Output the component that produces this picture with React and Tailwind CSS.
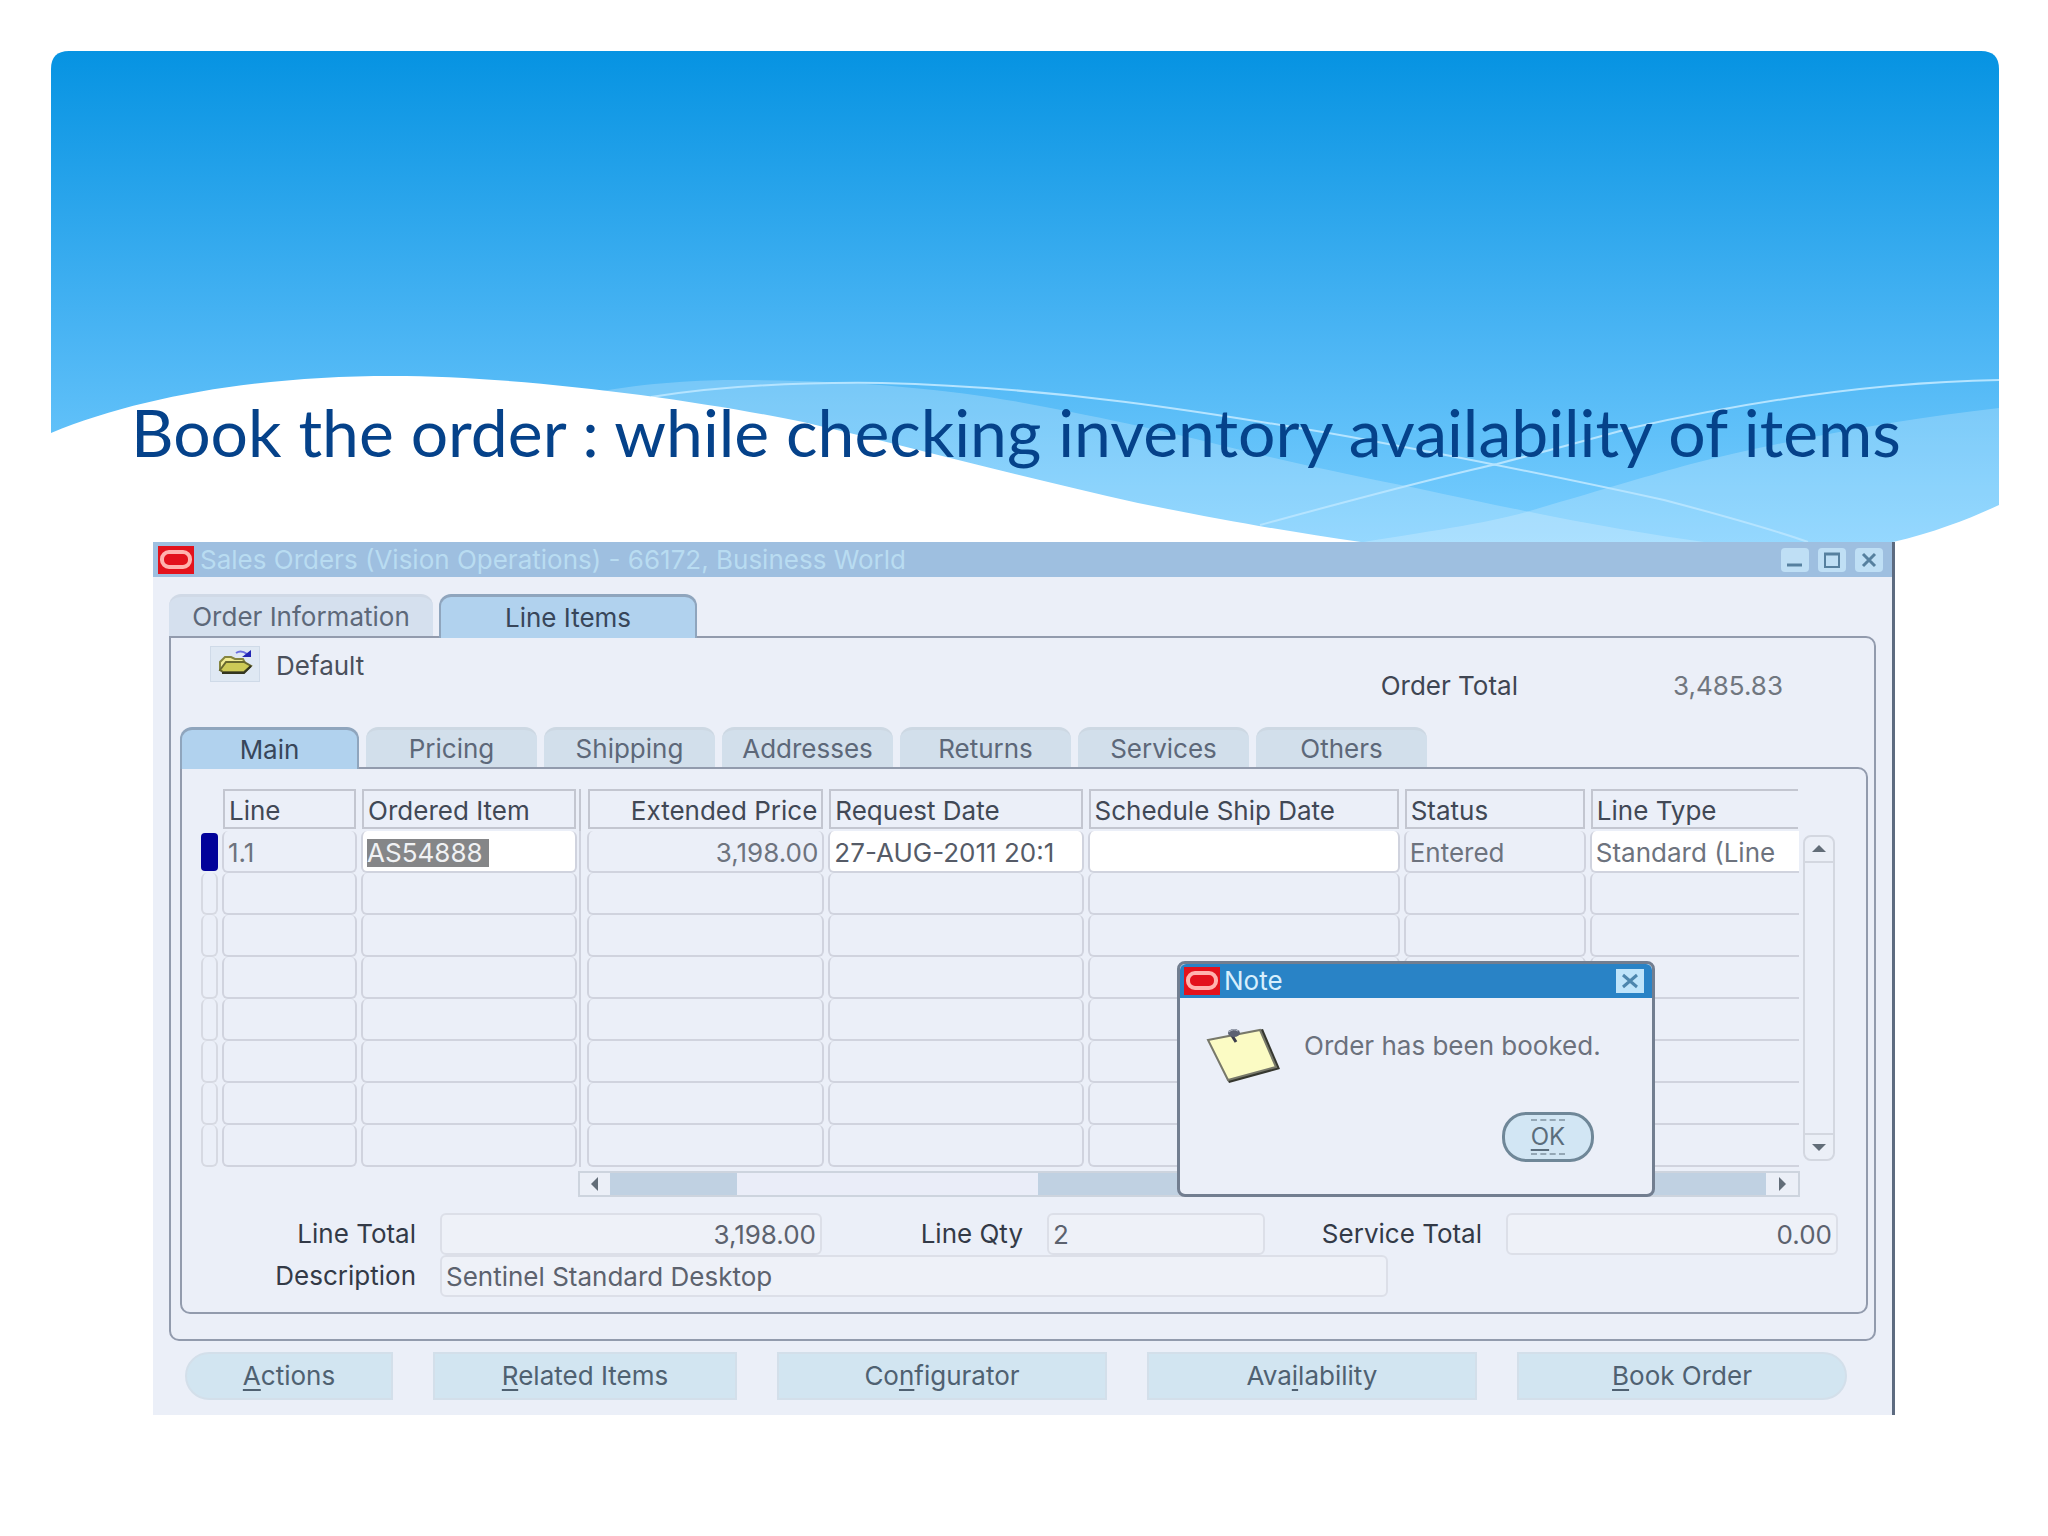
import React, { useState } from 'react';

const orderTabs = [
  { label: 'Order Information', width: 'w-[264px]' },
  { label: 'Line Items', width: 'w-[258px]' },
];

const lineTabs = ['Main', 'Pricing', 'Shipping', 'Addresses', 'Returns', 'Services', 'Others'];

const emptyRows = [2, 3, 4, 5, 6, 7, 8];

function WaveBanner() {
  return (
    <svg
      className="absolute inset-x-[51px] top-[51px] h-[500px] w-[calc(100%-100px)]"
      viewBox="0 0 1948 500"
      preserveAspectRatio="none"
      aria-hidden="true"
    >
      <defs>
        <linearGradient id="sky" x1="0" y1="0" x2="0" y2="1">
          <stop offset="0" stopColor="#0693e2" />
          <stop offset="0.58" stopColor="#4bb5f4" />
          <stop offset="1" stopColor="#7bcfff" />
        </linearGradient>
      </defs>
      <path d="M18 0H1930Q1948 0 1948 18V500H0V18Q0 0 18 0Z" fill="url(#sky)" />
      {/* pale hills */}
      <path
        d="M540 342C600 331 650 329 687 329C800 329 900 338 973 352C1060 368 1130 384 1169 394C1250 414 1310 426 1365 437C1480 462 1570 480 1660 492V500H540Z"
        fill="#fff"
        fillOpacity="0.21"
      />
      <path
        d="M1300 493C1380 480 1440 472 1482 459C1560 436 1600 424 1640 413C1740 388 1850 368 1948 357V500H1300Z"
        fill="#fff"
        fillOpacity="0.21"
      />
      <g fill="none" stroke="#b5e4ff" strokeWidth="2">
        <path d="M600 346C670 335 750 331 831 332C1000 336 1150 360 1300 386C1440 412 1540 433 1613 449C1670 464 1720 478 1757 491" />
        <path d="M1209 474C1290 452 1370 430 1446 413C1500 399 1540 388 1580 377C1700 350 1830 331 1948 329" />
      </g>
      {/* white foreground */}
      <path
        d="M0 382C90 345 210 325 341 325C470 325 640 348 752 371C860 396 970 426 1087 452C1170 469 1240 481 1310 491L1400 500H0Z"
        fill="#fff"
      />
      <path d="M1948 454C1920 467 1885 481 1842 491L1790 500H1948Z" fill="#fff" />
    </svg>
  );
}

function OracleMark() {
  return (
    <svg className="h-7 w-9 shrink-0" viewBox="0 0 36 28" aria-hidden="true">
      <rect width="36" height="28" fill="#e3121c" />
      <rect x="4" y="6" width="28" height="15" rx="7" fill="none" stroke="#ffb3ae" strokeWidth="4" />
    </svg>
  );
}

function WindowButton({ label, children }) {
  return (
    <button aria-label={label} className="flex h-6 w-7 items-center justify-center rounded-sm bg-[#bfdff5]">
      <svg className="h-5 w-6" viewBox="0 0 24 20" fill="none" stroke="#56809f" strokeWidth="3" aria-hidden="true">
        {children}
      </svg>
    </button>
  );
}

function ArrowButton({ label, points, className }) {
  return (
    <button aria-label={label} className={`flex shrink-0 items-center justify-center bg-[#ebeff7] ${className}`}>
      <svg className="h-4 w-4" viewBox="0 0 16 16" aria-hidden="true">
        <polygon points={points} fill="#626d78" />
      </svg>
    </button>
  );
}

function FolderIcon() {
  return (
    <svg className="h-8 w-9" viewBox="0 0 36 32" aria-hidden="true">
      <path d="M3 23V14L8 9H14L18 11H26L28 15" fill="#f0eb94" stroke="#85853f" strokeWidth="2" />
      <path d="M3 22L9 14H27L34 18L27 24H6Z" fill="#cdca57" stroke="#68682f" strokeWidth="2" />
      <path d="M5 25H27L34 18" fill="none" stroke="#33351f" strokeWidth="2" />
      <path d="M19 5C22 3 26 3 30 6" fill="none" stroke="#6a6fe0" strokeWidth="2" />
      <path d="M34 2V9H25Z" fill="#2326b5" />
    </svg>
  );
}

function StickyNoteIcon() {
  return (
    <svg className="h-15 w-20 shrink-0" viewBox="0 0 80 60" aria-hidden="true">
      <path d="M5 15L59 3L76 43L25 57Z" fill="#35372f" />
      <path d="M4 14L56 4L72 41L24 54Z" fill="#fbfbc4" stroke="#77786a" strokeWidth="2" />
      <path d="M27 8L32 16" stroke="#3b3d4c" strokeWidth="3" />
      <ellipse cx="30" cy="7" rx="6" ry="4" fill="#5c6272" />
      <path d="M25 6Q29 2 34 5" fill="none" stroke="#b9c0cf" strokeWidth="1" />
    </svg>
  );
}

function HeadCell({ children, className = '' }) {
  return (
    <th scope="col" className="px-[3px] pb-[2px] font-normal">
      <div className={`flex h-10 items-center overflow-hidden border-2 border-[#c3c6d0] px-1 pt-1 whitespace-nowrap ${className}`}>
        {children}
      </div>
    </th>
  );
}

function Cell({ children, className = '' }) {
  return (
    <td className="px-[2px] py-0">
      <div className={`flex h-[42px] items-center overflow-hidden rounded-md border-2 border-t-0 border-[#d0d3de] px-1 pt-1 whitespace-nowrap ${className}`}>
        {children}
      </div>
    </td>
  );
}

function LinesTable() {
  return (
    <table className="w-full table-fixed border-separate border-spacing-0 text-left text-[#414855]">
      <colgroup>
        <col className="w-[19px]" />
        <col className="w-[139px]" />
        <col className="w-[220px]" />
        <col className="w-[6px]" />
        <col className="w-[241px]" />
        <col className="w-[259px]" />
        <col className="w-[316px]" />
        <col className="w-[186px]" />
        <col className="w-[213px]" />
      </colgroup>
      <thead>
        <tr>
          <td />
          <HeadCell>Line</HeadCell>
          <HeadCell>Ordered Item</HeadCell>
          <td className="border-l-2 border-[#c3c6d0]" />
          <HeadCell className="justify-end px-0">Extended Price</HeadCell>
          <HeadCell>Request Date</HeadCell>
          <HeadCell>Schedule Ship Date</HeadCell>
          <HeadCell>Status</HeadCell>
          <HeadCell className="border-r-0">Line Type</HeadCell>
        </tr>
      </thead>
      <tbody>
        <tr className="text-[#6d737e]">
          <td className="py-[2px] pr-[2px]">
            <div className="h-[38px] rounded-sm bg-[#02029a]" />
          </td>
          <Cell>1.1</Cell>
          <Cell className="bg-white">
            <input
              aria-label="Ordered Item"
              defaultValue="AS54888"
              className="h-7 w-[122px] bg-[#858688] text-[#f1f2f4] outline-none"
            />
          </Cell>
          <td className="border-l-2 border-[#d0d3de]" />
          <Cell className="justify-end">3,198.00</Cell>
          <Cell className="bg-white">
            <input aria-label="Request Date" defaultValue="27-AUG-2011 20:1" className="w-full text-[#555b67] outline-none" />
          </Cell>
          <Cell className="bg-white">
            <input aria-label="Schedule Ship Date" className="w-full outline-none" />
          </Cell>
          <Cell>Entered</Cell>
          <Cell className="rounded-r-none border-r-0 bg-white">
            <input aria-label="Line Type" defaultValue="Standard (Line" className="w-full outline-none" />
          </Cell>
        </tr>
        {emptyRows.map((row) => (
          <tr key={row}>
            <td className="pr-[2px]">
              <div className="h-[42px] rounded-md border-2 border-t-0 border-[#d6d9e2]" />
            </td>
            <Cell />
            <Cell />
            <td className="border-l-2 border-[#d0d3de]" />
            <Cell />
            <Cell />
            <Cell />
            <Cell />
            <Cell className="rounded-r-none border-r-0" />
          </tr>
        ))}
      </tbody>
    </table>
  );
}

function Field({ id, label, value, labelClass, className }) {
  return (
    <>
      <label htmlFor={id} className={`shrink-0 text-right whitespace-nowrap text-[#333a47] ${labelClass}`}>
        {label}
      </label>
      <input
        id={id}
        readOnly
        value={value}
        className={`h-[42px] min-w-0 rounded-md border-2 border-[#dcdfe8] bg-[#eef1f8] px-1 text-[#5c626e] outline-none ${className}`}
      />
    </>
  );
}

function ActionButton({ before = '', mnemonic, after, className }) {
  return (
    <button className={`h-12 border-2 border-[#d3dfea] bg-[#d2e5f1] text-[#4f6171] ${className}`}>
      {before}
      <span className="underline underline-offset-4">{mnemonic}</span>
      {after}
    </button>
  );
}

function NoteDialog({ onClose }) {
  return (
    <div
      role="dialog"
      aria-label="Note"
      className="absolute top-[419px] right-[237px] flex w-[478px] flex-col rounded-lg border-3 border-[#727e90] bg-[#ebeff8]"
    >
      <div className="flex h-[34px] items-center gap-1 rounded-t-md bg-[#2983c6] px-1 text-[#d8effc]">
        <OracleMark />
        <span className="flex-1">Note</span>
        <button aria-label="Close" onClick={onClose} className="mr-1 flex h-6 w-7 items-center justify-center bg-[#bfe4fa]">
          <svg className="h-5 w-6" viewBox="0 0 24 20" fill="none" stroke="#4d86ad" strokeWidth="3" aria-hidden="true">
            <path d="M5 4L19 16M19 4L5 16" />
          </svg>
        </button>
      </div>
      <div className="flex gap-5 pt-7 pl-6 text-[#6b717d]">
        <StickyNoteIcon />
        <p className="pt-1 whitespace-nowrap">Order has been booked.</p>
      </div>
      <div className="flex justify-end pt-[26px] pr-[58px] pb-8">
        <button onClick={onClose} className="h-[50px] w-[92px] rounded-[24px] border-3 border-[#6f8798] bg-[#d2e6f4] text-2xl text-[#5b6d7c]">
          <span className="inline-block border-y-2 border-dashed border-[#94a7b5] leading-8">
            <span className="underline underline-offset-4">O</span>K
          </span>
        </button>
      </div>
    </div>
  );
}

export default function App() {
  const [orderTab, setOrderTab] = useState('Line Items');
  const [lineTab, setLineTab] = useState('Main');
  const [noteOpen, setNoteOpen] = useState(true);

  return (
    <main className="relative min-h-screen overflow-hidden bg-white px-[131px] pt-[392px] pb-[122px]">
      <WaveBanner />
      <h1 className="relative font-['Lato',sans-serif] text-[66px] leading-[80px] whitespace-nowrap text-[#05428a]">
        Book the order : while checking inventory availability of items
      </h1>

      <section className="relative mx-[22px] mt-[70px] border-r-3 border-[#5d6b80] bg-[#ebeff8] font-['Inter',sans-serif] text-[26px] leading-8">
        <header className="flex h-[35px] items-center gap-1.5 bg-[#9ebfe0] px-[5px]">
          <OracleMark />
          <span className="flex-1 text-[#b9dcf1]">Sales Orders (Vision Operations) - 66172, Business World</span>
          <div className="flex gap-[9px] pr-1">
            <WindowButton label="Minimize">
              <path d="M4 15H19" />
            </WindowButton>
            <WindowButton label="Maximize">
              <path d="M5 4H19V17H5Z" strokeWidth="2" />
              <path d="M4 4H20" />
            </WindowButton>
            <WindowButton label="Close">
              <path d="M6 4L18 16M18 4L6 16" />
            </WindowButton>
          </div>
        </header>

        <div className="px-4 pt-[17px]">
          <div role="tablist" aria-label="Order" className="flex gap-[6px]">
            {orderTabs.map((tab) => (
              <button
                key={tab.label}
                role="tab"
                aria-selected={tab.label === orderTab}
                onClick={() => setOrderTab(tab.label)}
                className={`rounded-t-xl border-t-3 ${tab.width} ${
                  tab.label === orderTab
                    ? 'relative z-10 -mb-[2px] h-[44px] border-x-2 border-[#8fa5bd] bg-[#b1d2ee] text-[#38465a]'
                    : 'h-[42px] border-[#d0d9e6] bg-[#d5e0ee] text-[#5d6879]'
                }`}
              >
                {tab.label}
              </button>
            ))}
          </div>

          <div className="rounded-[10px] rounded-tl-none border-2 border-[#929bad] pt-2 pr-[6px] pb-[25px] pl-[9px]">
            <div className="flex h-[81px] items-start pl-[30px]">
              <button aria-label="Open folder" className="flex h-9 w-[50px] items-center justify-center border border-[#cfdae8] bg-[#dfe8f3]">
                <FolderIcon />
              </button>
              <span className="ml-4 pt-1 text-[#4a505c]">Default</span>
              <span className="mr-[155px] ml-auto pt-6 text-[#3f4653]">Order Total</span>
              <span className="mr-[85px] pt-6 text-[#70767f]">3,485.83</span>
            </div>

            <div role="tablist" aria-label="Lines" className="flex gap-[7px]">
              {lineTabs.map((tab) => (
                <button
                  key={tab}
                  role="tab"
                  aria-selected={tab === lineTab}
                  onClick={() => setLineTab(tab)}
                  className={`rounded-t-xl border-t-3 ${
                    tab === lineTab
                      ? 'relative z-10 -mb-[2px] h-[42px] w-[179px] border-x-2 border-[#8fa5bd] bg-[#b1d2ee] text-[#38465a]'
                      : 'h-10 w-[171px] border-[#cdd8e3] bg-[#d2dfeb] text-[#5d6879]'
                  }`}
                >
                  {tab}
                </button>
              ))}
            </div>

            <div className="rounded-[10px] rounded-tl-none border-2 border-[#929bad] pt-5 pr-7 pb-[15px] pl-[19px]">
              <div className="flex gap-[2px] pr-[3px]">
                <div className="min-w-0 flex-1">
                  <LinesTable />
                </div>
                <div className="mt-[46px] mb-[6px] flex w-8 shrink-0 flex-col rounded-lg border-2 border-[#d3d7e0]">
                  <ArrowButton label="Scroll up" points="8,4 15,11 1,11" className="h-[26px] rounded-t-lg border-b-2 border-[#d3d7e0]" />
                  <div className="flex-1" />
                  <ArrowButton label="Scroll down" points="8,12 15,5 1,5" className="h-[26px] rounded-b-lg border-t-2 border-[#d3d7e0]" />
                </div>
              </div>

              <div className="mt-1 mr-[38px] ml-[377px] flex h-[26px] border-2 border-[#cdd4de] bg-[#c0d1e2]">
                <ArrowButton label="Scroll left" points="4,8 11,1 11,15" className="w-[30px]" />
                <div className="flex-1">
                  <div className="ml-[11%] h-full w-[26%] bg-[#eaedf8]" />
                </div>
                <ArrowButton label="Scroll right" points="12,8 5,1 5,15" className="w-[32px]" />
              </div>

              <div className="mt-4 flex items-center">
                <Field id="line-total" label="Line Total" value="3,198.00" labelClass="w-[215px]" className="ml-6 w-[382px] text-right" />
                <Field id="line-qty" label="Line Qty" value="2" labelClass="w-[201px]" className="ml-6 w-[218px]" />
                <Field id="service-total" label="Service Total" value="0.00" labelClass="w-[217px]" className="ml-6 flex-1 text-right" />
              </div>
              <div className="flex items-center pr-[450px]">
                <Field
                  id="description"
                  label="Description"
                  value="Sentinel Standard Desktop"
                  labelClass="w-[215px]"
                  className="ml-6 flex-1"
                />
              </div>
            </div>
          </div>
        </div>

        <div className="flex justify-between pt-[11px] pr-[45px] pb-[15px] pl-8">
          <ActionButton mnemonic="A" after="ctions" className="w-[208px] rounded-l-[24px]" />
          <ActionButton mnemonic="R" after="elated Items" className="w-[304px]" />
          <ActionButton before="Co" mnemonic="n" after="figurator" className="w-[330px]" />
          <ActionButton before="Ava" mnemonic="i" after="lability" className="w-[330px]" />
          <ActionButton mnemonic="B" after="ook Order" className="w-[330px] rounded-r-[24px]" />
        </div>

        {noteOpen && <NoteDialog onClose={() => setNoteOpen(false)} />}
      </section>
    </main>
  );
}
